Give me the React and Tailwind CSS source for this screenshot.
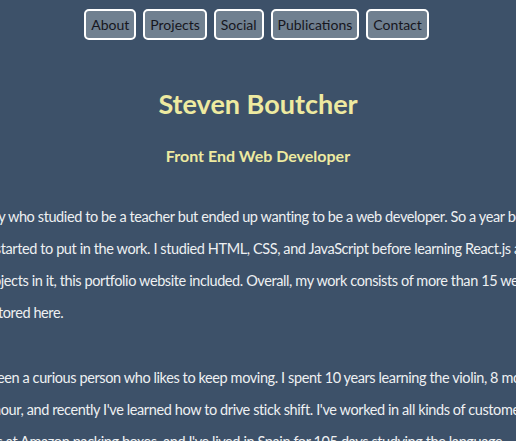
import React from "react";

const links = ["About", "Projects", "Social", "Publications", "Contact"];

// each paragraph is laid out line by line, the page is wider than the window
const about = [
  "Hi! I'm just a guy who studied to be a teacher but ended up wanting to be a web developer. So a year before graduating,",
  "at home, and I started to put in the work. I studied HTML, CSS, and JavaScript before learning React.js and building",
  "lots of small projects in it, this portfolio website included. Overall, my work consists of more than 15 websites",
  "projects, both stored here.",
];

const hobbies = [
  "I have always been a curious person who likes to keep moving. I spent 10 years learning the violin, 8 months learning",
  "to juggle for 1 hour, and recently I've learned how to drive stick shift. I've worked in all kinds of customer service jobs,",
  "I've pulled shifts at Amazon packing boxes, and I've lived in Spain for 105 days studying the language.",
];

function Paragraph({ lines }) {
  return (
    <div className="w-[702px] shrink-0 text-left text-[14.5px] leading-[32px] tracking-[-0.4px] text-[#eef0f2]">
      {lines.map((line, i) => (
        <div key={i} className="whitespace-nowrap">
          {line}
        </div>
      ))}
    </div>
  );
}

export default function App() {
  return (
    <div
      className="min-h-[441px] w-full overflow-hidden bg-[#3d5169] flex flex-col items-center"
      style={{ fontFamily: 'Lato, "Liberation Sans", sans-serif' }}
    >
      <nav className="mt-[9px] mr-[3px] flex gap-[7px]">
        {links.map((l) => (
          <a
            key={l}
            href="#"
            className="h-[31px] flex items-center rounded-[5px] border-2 border-white bg-[#708090] px-[5px] text-[14px] text-[#16161d]"
          >
            {l}
          </a>
        ))}
      </nav>

      <h1 className="mt-[46px] text-[27px] leading-[36px] font-bold text-[#eeeaa0]">
        Steven Boutcher
      </h1>
      <h2 className="mt-[22px] text-[16px] leading-[24px] font-bold text-[#eeeaa0]">
        Front End Web Developer
      </h2>

      <div className="mt-[33px] flex flex-col items-center gap-[33px]">
        <Paragraph lines={about} />
        <Paragraph lines={hobbies} />
      </div>
    </div>
  );
}
